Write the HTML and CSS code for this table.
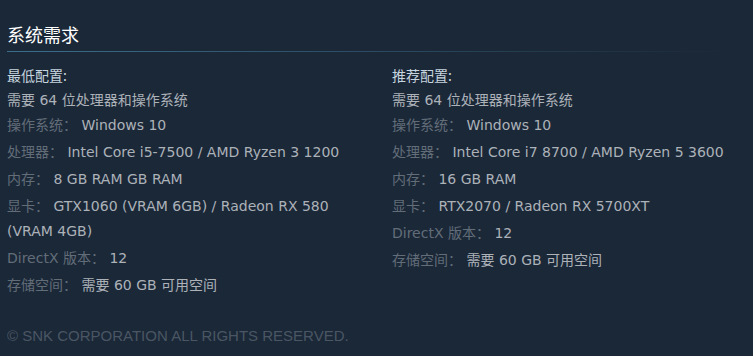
FILE: index.html
```html
<!DOCTYPE html>
<html lang="zh-CN">
<head>
<meta charset="utf-8">
<link rel="stylesheet" href="styles.css">
</head>
<body>
<div class="page">
  <h2 class="title">系统需求</h2>
  <div class="sysreq">
    <div class="col">
      <div class="col-head">最低配置:</div>
      <ul class="list">
        <li class="first">需要 64 位处理器和操作系统</li>
        <li><span class="lbl">操作系统：</span> Windows 10</li>
        <li><span class="lbl">处理器：</span> Intel Core i5-7500 / AMD Ryzen 3 1200</li>
        <li><span class="lbl">内存：</span> 8 GB RAM GB RAM</li>
        <li><span class="lbl">显卡：</span> GTX1060 (VRAM 6GB) / Radeon RX 580 (VRAM 4GB)</li>
        <li><span class="lbl">DirectX 版本：</span> 12</li>
        <li><span class="lbl">存储空间：</span> 需要 60 GB 可用空间</li>
      </ul>
    </div>
    <div class="col col-right">
      <div class="col-head">推荐配置:</div>
      <ul class="list">
        <li class="first">需要 64 位处理器和操作系统</li>
        <li><span class="lbl">操作系统：</span> Windows 10</li>
        <li><span class="lbl">处理器：</span> Intel Core i7 8700 / AMD Ryzen 5 3600</li>
        <li><span class="lbl">内存：</span> 16 GB RAM</li>
        <li><span class="lbl">显卡：</span> RTX2070 / Radeon RX 5700XT</li>
        <li><span class="lbl">DirectX 版本：</span> 12</li>
        <li><span class="lbl">存储空间：</span> 需要 60 GB 可用空间</li>
      </ul>
    </div>
  </div>
  <div class="legal">© SNK CORPORATION ALL RIGHTS RESERVED.</div>
</div>
</body>
</html>
```

FILE: styles.css
```css
html, body {
  margin: 0;
  padding: 0;
  background: #1b2838;
}
body {
  font-family: "DejaVu Sans", "Noto Sans CJK SC", sans-serif;
  color: #acb2b8;
}
.page {
  padding: 22px 0 0 7px;
}
.title {
  margin: 0 23px 0 0;
  font-family: "Noto Sans CJK SC", sans-serif;
  font-size: 18px;
  font-weight: normal;
  color: #ffffff;
  line-height: 25px;
  padding-bottom: 5px;
  background-image: linear-gradient(to right, #3b6e8c 0%, rgba(59, 110, 140, 0) 100%);
  background-size: 100% 1px;
  background-repeat: no-repeat;
  background-position: bottom left;
}
.sysreq {
  display: flex;
  padding-top: 10px;
}
.col {
  width: 385px;
  flex: none;
}
.col-right {
  flex: 1;
  width: auto;
}
.col-head {
  font-family: "Noto Sans CJK SC", sans-serif;
  font-size: 14px;
  line-height: 26px;
  color: #c6d4df;
}
.list {
  list-style: none;
  margin: 0;
  padding: 0;
  font-size: 14px;
  line-height: 25px;
}
.list li {
  margin-bottom: 2px;
  padding-right: 14px;
}
.col-right .list li {
  padding-right: 0;
}
.list li.first {
  margin-bottom: 0;
}
.lbl {
  color: #626d78;
}
.legal {
  margin-top: 27px;
  font-family: "Liberation Sans", Arial, sans-serif;
  font-size: 15px;
  color: #4a5663;
}
```
